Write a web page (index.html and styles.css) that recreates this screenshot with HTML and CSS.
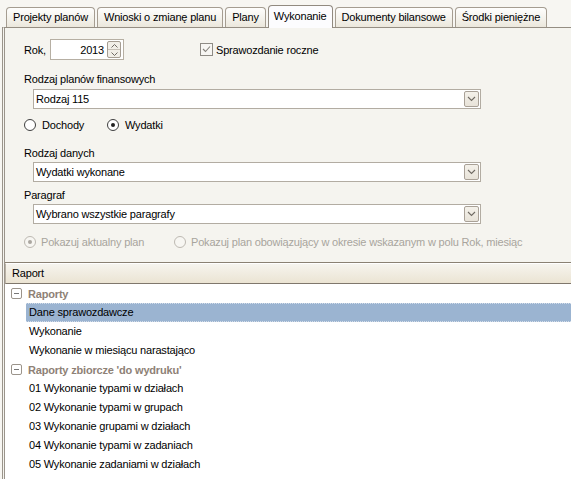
FILE: index.html
```html
<!DOCTYPE html>
<html>
<head>
<meta charset="utf-8">
<link rel="stylesheet" href="styles.css">
</head>
<body>
<div class="tabs">
  <div class="tab">Projekty planów</div>
  <div class="tab">Wnioski o zmianę planu</div>
  <div class="tab">Plany</div>
  <div class="tab active">Wykonanie</div>
  <div class="tab">Dokumenty bilansowe</div>
  <div class="tab">Środki pieniężne</div>
</div>
<div class="panel">
  <div class="form">
    <div class="row1">
      <span class="lbl">Rok,</span>
      <div class="spin">
        <span class="spin-val">2013</span>
        <div class="spin-btns">
          <div class="sb"><svg width="7" height="4" viewBox="0 0 7 4"><path d="M0.5 3.5 L3.5 0.5 L6.5 3.5" fill="none" stroke="#6f6a63" stroke-width="1"/></svg></div>
          <div class="sb"><svg width="7" height="4" viewBox="0 0 7 4"><path d="M0.5 0.5 L3.5 3.5 L6.5 0.5" fill="none" stroke="#6f6a63" stroke-width="1"/></svg></div>
        </div>
      </div>
      <label class="chk">
        <span class="chkbox"><svg width="11" height="11" viewBox="0 0 11 11"><path d="M2 5 L4.5 7.5 L9 2.5" fill="none" stroke="#85827c" stroke-width="1.1"/></svg></span>
        Sprawozdanie roczne
      </label>
    </div>

    <div class="field-label f1">Rodzaj planów finansowych</div>
    <div class="combo"><span class="cval">Rodzaj 115</span><span class="cbtn"><svg width="9" height="6" viewBox="0 0 9 6"><path d="M1 1 L4.5 4.5 L8 1" fill="none" stroke="#6f6a63" stroke-width="1.1"/></svg></span></div>

    <div class="radios r1">
      <span class="radio"><span class="rc"></span>Dochody</span>
      <span class="radio"><span class="rc on"></span>Wydatki</span>
    </div>

    <div class="field-label f2">Rodzaj danych</div>
    <div class="combo"><span class="cval">Wydatki wykonane</span><span class="cbtn"><svg width="9" height="6" viewBox="0 0 9 6"><path d="M1 1 L4.5 4.5 L8 1" fill="none" stroke="#6f6a63" stroke-width="1.1"/></svg></span></div>

    <div class="field-label f3">Paragraf</div>
    <div class="combo"><span class="cval">Wybrano wszystkie paragrafy</span><span class="cbtn"><svg width="9" height="6" viewBox="0 0 9 6"><path d="M1 1 L4.5 4.5 L8 1" fill="none" stroke="#6f6a63" stroke-width="1.1"/></svg></span></div>

    <div class="radios r2 disabled">
      <span class="radio"><span class="rc on"></span>Pokazuj aktualny plan</span>
      <span class="radio"><span class="rc"></span>Pokazuj plan obowiązujący w okresie wskazanym w polu Rok, miesiąc</span>
    </div>
  </div>

  <div class="report">
    <div class="rhead">Raport</div>
    <div class="tree">
      <div class="grp"><span class="minus"></span>Raporty</div>
      <div class="item sel"><span>Dane sprawozdawcze</span></div>
      <div class="item"><span>Wykonanie</span></div>
      <div class="item"><span>Wykonanie w miesiącu narastająco</span></div>
      <div class="grp"><span class="minus"></span>Raporty zbiorcze 'do wydruku'</div>
      <div class="item"><span>01 Wykonanie typami w działach</span></div>
      <div class="item"><span>02 Wykonanie typami w grupach</span></div>
      <div class="item"><span>03 Wykonanie grupami w działach</span></div>
      <div class="item"><span>04 Wykonanie typami w zadaniach</span></div>
      <div class="item"><span>05 Wykonanie zadaniami w działach</span></div>
    </div>
  </div>
</div>
</body>
</html>
```
FILE: styles.css
```css
* { box-sizing: border-box; }
html, body { margin: 0; padding: 0; }
body {
  width: 571px;
  height: 479px;
  overflow: hidden;
  background: #f7f6f2;
  font-family: "Liberation Sans", Arial, sans-serif;
  font-size: 11px;
  letter-spacing: -0.18px;
  color: #000;
}
.tabs {
  display: flex;
  align-items: flex-end;
  gap: 2px;
  padding: 0 0 0 6px;
  height: 27px;
}
.tab {
  height: 20px;
  padding: 0 6px 1px;
  display: flex;
  align-items: center;
  border: 1px solid #a59d91;
  border-bottom: none;
  border-radius: 4px 4px 0 0;
  background: linear-gradient(#fefefd, #f3f1ea 60%, #ebe7dc);
  white-space: nowrap;
}
.tab.active {
  height: 23px;
  padding: 0 5px 2px;
  background: #fcfcfe;
  border-color: #918a80;
  margin-bottom: -1px;
  position: relative;
  z-index: 1;
}
.panel {
  border-top: 1px solid #958e83;
  border-left: 3px double #9a948b;
  margin-left: 2px;
  background: #f5f4ef;
  height: 452px;
}
.form {
  padding: 11px 0 0 19px;
}
.row1 {
  display: flex;
  align-items: center;
  height: 21px;
}
.lbl { width: 26px; }
.spin {
  width: 74px;
  height: 21px;
  background: #fff;
  border: 1px solid #b6afa3;
  display: flex;
  align-items: center;
  justify-content: flex-end;
  padding-right: 2px;
}
.spin-val { margin-right: 3px; }
.spin-btns {
  display: flex;
  flex-direction: column;
  width: 14px;
  height: 17px;
  border: 1px solid #a59d92;
  border-radius: 2px;
  background: #f1eee7;
}
.sb {
  flex: 1;
  display: flex;
  align-items: center;
  justify-content: center;
}
.sb + .sb { border-top: 1px solid #c6c0b6; }
.chk {
  margin-left: 76px;
  display: flex;
  align-items: center;
}
.chkbox {
  width: 13px;
  height: 13px;
  border: 1px solid #8e8b85;
  background: #f7f6f3;
  margin-right: 3px;
  display: flex;
  align-items: center;
  justify-content: center;
}
.field-label { height: 14px; line-height: 14px; }
.f1 { margin-top: 12px; }
.f2 { margin-top: 13px; }
.f3 { margin-top: 6px; }
.combo {
  margin: 2px 0 0 9px;
  width: 448px;
  height: 20px;
  background: #fff;
  border: 1px solid #b2aca2;
  display: flex;
  align-items: center;
  justify-content: space-between;
  padding: 0 1px 0 2px;
}
.f1 + .combo { margin-top: 3px; }
.cbtn {
  width: 15px;
  height: 16px;
  border: 1px solid #a9a197;
  border-radius: 2px;
  background: linear-gradient(#f4f1ea, #e8e3d9);
  display: flex;
  align-items: center;
  justify-content: center;
}
.radios {
  display: flex;
  height: 16px;
  align-items: center;
}
.r1 { margin-top: 8px; }
.r1 .radio:first-child { width: 83px; }
.r2 { margin-top: 10px; }
.r2 .radio:first-child { width: 150px; }
.radio { display: flex; align-items: center; white-space: nowrap; }
.rc {
  width: 12px;
  height: 12px;
  border: 1px solid #3f3f3f;
  border-radius: 50%;
  background: #fff;
  margin-right: 6px;
  position: relative;
}
.r2 .rc { margin-right: 5px; }
.rc.on::after {
  content: "";
  position: absolute;
  left: 3px; top: 3px;
  width: 4px; height: 4px;
  border-radius: 50%;
  background: #222;
}
.disabled { color: #a8a49d; }
.disabled .rc { border-color: #bdb9b2; background: #f7f6f2; }
.disabled .rc.on::after { background: #aaa6a0; }
.report {
  margin-top: 12px;
  border-top: 1px solid #8a8173;
  background: #fff;
  height: 220px;
}
.rhead {
  height: 21px;
  line-height: 19px;
  padding-left: 6px;
  border-top: 1px solid #fff;
  border-left: 1px solid #b9b2a6;
  border-bottom: 1px solid #7f776c;
  background: linear-gradient(#f6f4ee, #ebe4d3);
}
.grp {
  height: 19px;
  display: flex;
  align-items: center;
  font-weight: bold;
  color: #8e8176;
  padding-left: 6px;
}
.minus {
  width: 11px;
  height: 11px;
  border: 1px solid #9b948b;
  border-radius: 2px;
  margin-right: 6px;
  position: relative;
  background: #fff;
}
.minus::after {
  content: "";
  position: absolute;
  left: 2px; top: 4px;
  width: 5px; height: 1px;
  background: #777;
}
.item {
  height: 19px;
  line-height: 19px;
  padding-left: 21px;
  display: flex;
}
.item span { padding-left: 3px; }
.item.sel span {
  flex: 1;
  background: #9bb4d1;
  border-top: 1px dotted #d4dde9;
  border-bottom: 1px dotted #d4dde9;
  line-height: 17px;
}
```
